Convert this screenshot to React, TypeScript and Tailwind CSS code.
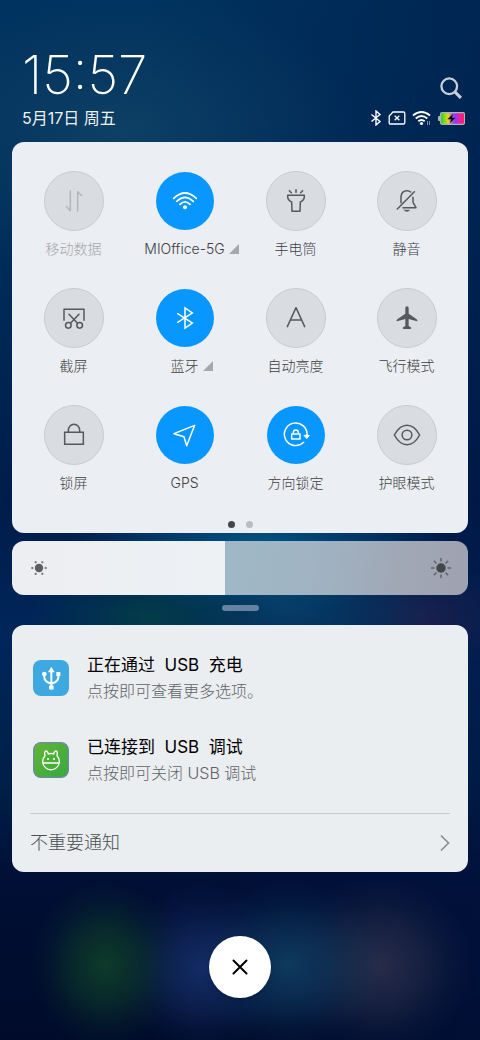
import { useState, type ReactNode } from "react";

type Tile = {
  label: string;
  icon: ReactNode;
  on?: boolean;
  disabled?: boolean;
  expandable?: boolean;
};

function Glyph({ children }: { children: ReactNode }) {
  return (
    <svg
      viewBox="-42 -42 84 84"
      className="size-7"
      fill="none"
      stroke="currentColor"
      strokeWidth="4.5"
      strokeLinecap="round"
      strokeLinejoin="round"
      aria-hidden="true"
    >
      {children}
    </svg>
  );
}

const tiles: Tile[] = [
  {
    label: "移动数据",
    disabled: true,
    icon: <path d="M-11-30V29L-22 17M11 30V-28L23-16" />,
  },
  {
    label: "MIOffice-5G",
    on: true,
    expandable: true,
    icon: (
      <>
        <path strokeWidth="5" d="M-34-8Q0-40 34-8M-25 1Q0-23 25 1M-15 10Q0-5 15 10" />
        <circle cx="0" cy="19" r="6" fill="currentColor" stroke="none" />
      </>
    ),
  },
  {
    label: "手电筒",
    icon: (
      <path d="M0-34V-26M-20-31L-14-25M20-31L14-25M-25-17H25V-13Q25-3 13 3L12 31H-12L-13 3Q-25-3-25-13Z" />
    ),
  },
  {
    label: "静音",
    icon: (
      <>
        <path d="M-18 5V-12Q-17-31 0-31Q7-31 11-27M18-11V4L27 20H-12M-29 24L22-28" />
        <path d="M-9 27H8Q0 36-9 27Z" fill="currentColor" strokeWidth="1" />
      </>
    ),
  },
  {
    label: "截屏",
    icon: (
      <>
        <path strokeLinecap="butt" d="M-30 8V-26H30V8" />
        <path d="M-10 15L15-11M10 15L-15-11" />
        <circle cx="-17" cy="22" r="8.5" />
        <circle cx="17" cy="22" r="8.5" />
      </>
    ),
  },
  {
    label: "蓝牙",
    on: true,
    expandable: true,
    icon: <path strokeLinejoin="miter" d="M-22-13L22 15L0 30V-30L22-15L-22 13" />,
  },
  {
    label: "自动亮度",
    icon: <path d="M-26 26L0-31L26 26M-17 6H17" />,
  },
  {
    label: "飞行模式",
    icon: (
      <path
        fill="currentColor"
        stroke="none"
        d="M-5-29Q-5-35 0-35T5-29V-13L29 4Q34 9 30 10L5 3V24L12 28Q14 33 10 33H-10Q-14 33-12 28L-5 24V3L-30 10Q-34 9-29 4L-5-13Z"
      />
    ),
  },
  {
    label: "锁屏",
    icon: <path strokeLinejoin="miter" d="M-28-8H28V28H-28ZM-17-8V-14A17 18 0 0 1 17-14V-8" />,
  },
  {
    label: "GPS",
    on: true,
    icon: <path d="M-33-4L29-29L5 32L-3 5Z" />,
  },
  {
    label: "方向锁定",
    on: true,
    icon: (
      <>
        <path d="M23 22A34 34 0 1 1 33 1" />
        <path d="M25 1H40L33 10Z" fill="currentColor" strokeWidth="3" />
        <path d="M-13-3H12V12H-13ZM-8-3V-7A7.500 8 0 0 1 7-7V-3" />
      </>
    ),
  },
  {
    label: "护眼模式",
    icon: (
      <>
        <path d="M-38 0Q-22-29 0-29T38 0Q22 29 0 29T-38 0Z" />
        <circle cx="0" cy="0" r="14.500" />
      </>
    ),
  },
];

function QuickTile({ tile }: { tile: Tile }) {
  const [on, setOn] = useState(!!tile.on);
  const iconTone = tile.disabled ? "text-[#b3b6ba]" : "text-[#55585c]";
  const labelTone = tile.disabled ? "text-[#a4a7ab]" : "text-[#3c3e42]";
  return (
    <button
      type="button"
      aria-pressed={on}
      disabled={tile.disabled}
      onClick={() => setOn(!on)}
      className="flex flex-col items-center gap-2"
    >
      <span className="flex size-15 items-center justify-center">
        <span
          className={
            on
              ? "flex size-[58px] items-center justify-center rounded-full bg-[#0797ff] text-white"
              : `flex size-15 items-center justify-center rounded-full border border-[#c8cbcf] bg-[#d9dce0] ${iconTone}`
          }
        >
          <Glyph>{tile.icon}</Glyph>
        </span>
      </span>
      <span className={`flex items-center gap-1 text-sm leading-5 whitespace-nowrap ${labelTone}`}>
        {tile.expandable && <span className="w-2.5" />}
        {tile.label}
        {tile.expandable && (
          <svg viewBox="0 0 10 10" className="size-2.5" aria-hidden="true">
            <path d="M10 0V10H0Z" fill="#a5a8ac" />
          </svg>
        )}
      </span>
    </button>
  );
}

function StatusIcons() {
  return (
    <div className="flex items-center gap-1.5 text-white">
      <svg viewBox="0 0 12 16" className="h-4 w-3" fill="none" stroke="currentColor" strokeWidth="1.4" aria-label="蓝牙">
        <path d="M1.500 4.500L10 11.500L6 15V1L10 4.500L1.500 11.500" />
      </svg>
      <svg viewBox="0 0 18 14" className="h-3.5 w-[18px]" fill="none" stroke="currentColor" strokeWidth="1.3" aria-label="无 SIM 卡">
        <path d="M5 1H15.500Q16.800 1 16.800 2.300V11.700Q16.800 13 15.500 13H2.500Q1.200 13 1.200 11.700V5Z" />
        <path d="M6.700 4.700L11.300 9.300M11.300 4.700L6.700 9.300" />
      </svg>
      <svg viewBox="0 0 20 16" className="h-4 w-5" fill="none" stroke="currentColor" strokeWidth="1.800" aria-label="Wi-Fi">
        <path d="M1 5.500Q9.500-1.500 18 5.500M3.700 8.500Q9.500 3.500 15.300 8.500M6.300 11.300Q9.500 8.700 12.700 11.300" />
        <circle cx="9.500" cy="13.500" r="1.600" fill="currentColor" stroke="none" />
        <path d="M15.500 11V15M17.500 11V15" strokeWidth="0.800" opacity="0.6" />
      </svg>
      <svg viewBox="0 0 27 13" className="h-[13px] w-[27px]" aria-label="正在充电">
        <defs>
          <linearGradient id="charge">
            <stop offset="0" stopColor="#2fc52c" />
            <stop offset="0.150" stopColor="#6fdc1c" />
            <stop offset="0.320" stopColor="#f0d126" />
            <stop offset="0.480" stopColor="#a060c8" />
            <stop offset="0.620" stopColor="#8a3cf5" />
            <stop offset="0.800" stopColor="#f0209c" />
            <stop offset="1" stopColor="#ff1560" />
          </linearGradient>
        </defs>
        <rect x="0" y="4" width="3" height="5" rx="1" fill="#a9b4bd" />
        <rect x="2.500" y="0.700" width="24" height="11.600" rx="1.500" fill="url(#charge)" stroke="#a9b4bd" strokeWidth="1.200" />
        <path d="M15 2L9.500 7.200H13L12 11L17.500 5.800H14Z" fill="#08051c" />
      </svg>
    </div>
  );
}

function Brightness() {
  const [value, setValue] = useState(467);
  const stop = `${value / 10}%`;
  return (
    <div className="relative mx-3 mt-2">
      <input
        type="range"
        aria-label="亮度"
        min="0"
        max="1000"
        value={value}
        onChange={(e) => setValue(Number(e.target.value))}
        className="block h-[54px] w-full appearance-none rounded-xl [&::-webkit-slider-thumb]:appearance-none [&::-webkit-slider-thumb]:opacity-0"
        style={{
          backgroundImage: `linear-gradient(90deg, #edeef2, #edf1f4 ${stop}, transparent ${stop}), linear-gradient(100deg, #9fb8c7 45%, #a0b4c3 65%, #a0a7b5 85%, #9fa2b0)`,
        }}
      />
      <svg viewBox="-9 -9 18 18" className="pointer-events-none absolute top-[18px] left-[18px] size-[18px] text-[#5b5d60]" fill="currentColor" aria-hidden="true">
        <circle r="4.200" />
        {[0, 60, 120, 180, 240, 300].map((a) => (
          <circle key={a} cx="6.700" r="1.200" opacity="0.750" transform={`rotate(${a})`} />
        ))}
      </svg>
      <svg viewBox="-11 -11 22 22" className="pointer-events-none absolute top-4 right-4 size-[22px] text-[#424549]" fill="currentColor" aria-hidden="true">
        <circle r="4.700" />
        {[0, 45, 90, 135, 180, 225, 270, 315].map((a) => (
          <path key={a} d="M7 0H9.500" stroke="currentColor" strokeWidth="1.400" strokeLinecap="round" opacity="0.700" transform={`rotate(${a})`} />
        ))}
      </svg>
    </div>
  );
}

function UsbIcon() {
  return (
    <svg viewBox="0 0 108 108" className="size-9 shrink-0" aria-hidden="true">
      <rect width="108" height="108" rx="24" fill="#3ea8e0" />
      <g fill="none" stroke="#fff" strokeWidth="6" strokeLinecap="round" strokeLinejoin="round">
        <path d="M55 34V82M34 44V52Q35 66 55 71Q75 66 76 52V44" />
      </g>
      <path d="M55 20L65 37H45Z" fill="#fff" />
      <circle cx="34" cy="42" r="7" fill="#fff" />
      <rect x="70" y="36" width="12" height="12" fill="#fff" />
      <rect x="48" y="76" width="14" height="13" rx="4" fill="#fff" />
    </svg>
  );
}

function DebugIcon() {
  return (
    <svg viewBox="0 0 108 108" className="size-9 shrink-0" aria-hidden="true">
      <defs>
        <linearGradient id="debug" x1="0" y1="0" x2="1" y2="1">
          <stop offset="0" stopColor="#62b533" />
          <stop offset="1" stopColor="#36a93f" />
        </linearGradient>
      </defs>
      <rect x="2" y="2" width="104" height="104" rx="22" fill="url(#debug)" stroke="#6d8aa6" strokeWidth="4" />
      <g fill="none" stroke="#fff" strokeWidth="4" strokeLinecap="round" strokeLinejoin="round">
        <path d="M36 41A25 25 0 1 0 72 41Q75 28 69 27Q64 27 62 36Q54 33 46 36Q44 27 39 27Q33 28 36 41ZM30 63H78" />
      </g>
      <circle cx="45" cy="51" r="3" fill="#fff" />
      <circle cx="63" cy="51" r="3" fill="#fff" />
    </svg>
  );
}

function Notice({ icon, title, detail }: { icon: ReactNode; title: string; detail: string }) {
  return (
    <li>
      <button type="button" className="flex w-full items-center gap-[18px] text-left">
        {icon}
        <span className="flex flex-col gap-0.5">
          <span className="text-[17px] leading-6 font-normal whitespace-pre text-black">{title}</span>
          <span className="text-base leading-6 text-[#5f6266]">{detail}</span>
        </span>
      </button>
    </li>
  );
}

export default function App() {
  return (
    <main className="flex min-h-screen flex-col bg-[#000d2e] bg-[radial-gradient(ellipse_75px_85px_at_22%_965px,#0d3b29_0%,#0d3b29a0_40%,#0d3b2930_75%,#0d3b2900_100%),radial-gradient(ellipse_85px_85px_at_42%_968px,#142c64_0%,#142c64a0_40%,#142c6430_75%,#142c6400_100%),radial-gradient(ellipse_95px_85px_at_60%_965px,#0e3a5e_0%,#0e3a5ea0_40%,#0e3a5e30_75%,#0e3a5e00_100%),radial-gradient(ellipse_95px_90px_at_79%_965px,#272c49_0%,#272c49a0_40%,#272c4930_75%,#272c4900_100%),radial-gradient(ellipse_190px_65px_at_54%_546px,#005585_0%,#00558590_45%,#00558500_100%),radial-gradient(ellipse_120px_60px_at_31%_618px,#033d48_0%,#033d4880_45%,#033d4800_100%),radial-gradient(ellipse_150px_70px_at_60%_608px,#063d66_0%,#063d6690_45%,#063d6600_100%),radial-gradient(ellipse_100px_55px_at_88%_618px,#1b1f4c_0%,#1b1f4c80_45%,#1b1f4c00_100%),radial-gradient(ellipse_240px_140px_at_25%_130px,#0e3f64_0%,#0e3f6480_45%,#0e3f6400_100%),linear-gradient(90deg,transparent_30%,#00144270_100%),linear-gradient(180deg,#00335f_0px,#00305d_200px,#001c4a_500px,#00265a_640px,#00204a_780px,#000f35_880px,#000b2a_1040px)] [font-family:Inter,'Noto_Sans_CJK_SC',sans-serif] font-light">
      <header className="flex items-end justify-between pt-12 pr-[15px] pb-3 pl-[22px]">
        <div>
          <time className="block text-[53px] leading-[54px] font-extralight text-white">15:57</time>
          <p className="mt-1 text-base leading-6 font-normal text-white/95">5月17日 周五</p>
        </div>
        <div className="flex flex-col items-end gap-2 pb-1">
          <button type="button" aria-label="搜索" className="text-[#c5cfda]">
            <svg viewBox="0 0 24 24" className="size-7" fill="none" stroke="currentColor" strokeWidth="2" aria-hidden="true">
              <circle cx="10.500" cy="10.500" r="6.700" />
              <path d="M15.500 15.500L20.500 20.500" strokeWidth="2.600" />
            </svg>
          </button>
          <StatusIcons />
        </div>
      </header>

      <section aria-label="快捷设置" className="mx-3 rounded-xl bg-[#ebeef2] px-1.5 pt-[29px] pb-[5px]">
        <div className="grid grid-cols-4 gap-y-[29px]">
          {tiles.map((t) => (
            <QuickTile key={t.label} tile={t} />
          ))}
        </div>
        <div className="mt-7 flex justify-center gap-[11px]">
          <span className="size-[7px] rounded-full bg-[#45474a]" />
          <span className="size-[7px] rounded-full bg-[#b9bcc0]" />
        </div>
      </section>

      <Brightness />

      <div className="mx-auto mt-[10px] h-[6px] w-[37px] rounded-full bg-[#6582a0]" />

      <section aria-label="通知" className="mx-3 mt-3.5 rounded-xl bg-[#ebeef1] px-[18px] pt-7">
        <ul className="flex flex-col gap-8 px-[3px]">
          <Notice icon={<UsbIcon />} title="正在通过  USB  充电" detail="点按即可查看更多选项。" />
          <Notice icon={<DebugIcon />} title="已连接到  USB  调试" detail="点按即可关闭 USB 调试" />
        </ul>
        <button type="button" className="mt-7 flex w-full items-center justify-between border-t border-[#c6cacd] py-4 text-lg leading-[26px] text-[#4a4d51]">
          不重要通知
          <svg viewBox="0 0 10 18" className="h-[18px] w-2.5" fill="none" stroke="#8b8e92" strokeWidth="1.700" aria-hidden="true">
            <path d="M1 1.500L8.500 9L1 16.500" />
          </svg>
        </button>
      </section>

      <button
        type="button"
        aria-label="清除全部通知"
        className="mx-auto mt-16 mb-10 flex size-[62px] items-center justify-center rounded-full bg-white text-black shadow-md"
      >
        <svg viewBox="0 0 16 16" className="size-4" fill="none" stroke="currentColor" strokeWidth="2" strokeLinecap="round" aria-hidden="true">
          <path d="M1.500 1.500L14.500 14.500M14.500 1.500L1.500 14.500" />
        </svg>
      </button>
    </main>
  );
}
